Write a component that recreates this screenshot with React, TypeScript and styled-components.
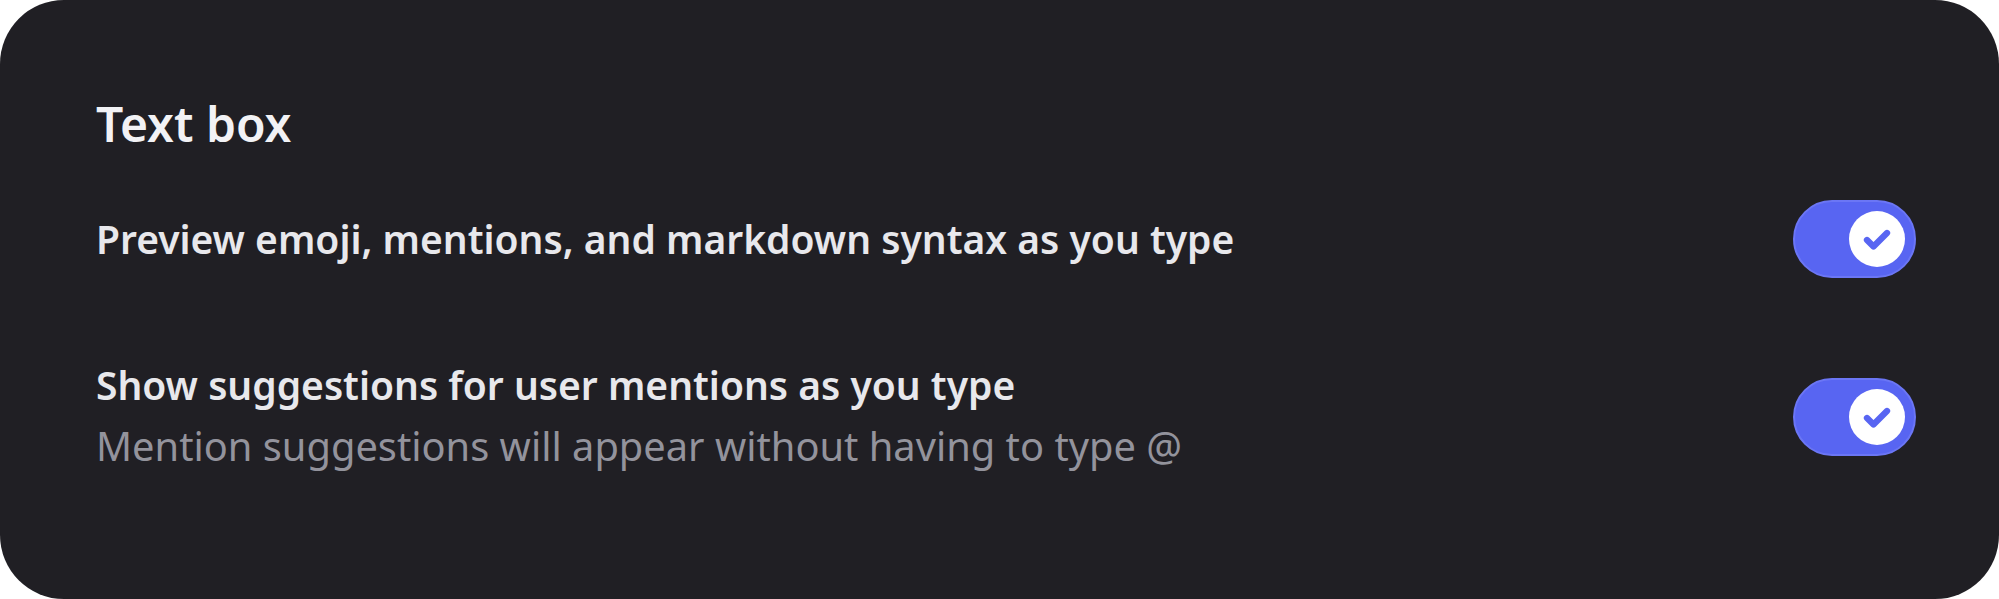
import React, { useState } from "react"
import styled, { createGlobalStyle } from "styled-components"

const GlobalStyle = createGlobalStyle`
  html, body {
    margin: 0;
    padding: 0;
    background: #ffffff;
  }
  body {
    font-family: "Noto Sans", "Open Sans", sans-serif;
  }
`

const Card = styled.section`
  box-sizing: border-box;
  width: 1999px;
  height: 599px;
  background-color: #201f24;
  border-radius: 64px;
  padding: 92px 83px 0 96px;
  display: flex;
  flex-direction: column;
`

const Heading = styled.h2`
  margin: 0;
  color: #f2f2f5;
  font-size: 48px;
  line-height: 64px;
  font-weight: 600;
`

const Rows = styled.div`
  display: flex;
  flex-direction: column;
  gap: 78px;
  margin-top: 44px;
`

const Row = styled.div`
  display: flex;
  align-items: center;
  justify-content: space-between;
  gap: 40px;
`

const TextBlock = styled.div`
  display: flex;
  flex-direction: column;
`

const Title = styled.div`
  color: #e8e8ec;
  font-size: 39px;
  line-height: 58px;
  font-weight: 600;
`

const Description = styled.div`
  color: #93939c;
  font-size: 39.8px;
  line-height: 64px;
  font-weight: 400;
`

const Track = styled.button<{ $on: boolean }>`
  box-sizing: border-box;
  flex: none;
  width: 123px;
  height: 78px;
  padding: 0 9px;
  border-radius: 39px;
  border: 2px solid ${(p) => (p.$on ? "#6b76f5" : "#4e4f58")};
  background-color: ${(p) => (p.$on ? "#5865f2" : "#3f4048")};
  display: flex;
  align-items: center;
  justify-content: ${(p) => (p.$on ? "flex-end" : "flex-start")};
  cursor: pointer;
`

const Thumb = styled.span`
  width: 56px;
  height: 56px;
  border-radius: 50%;
  background-color: #ffffff;
  display: flex;
  align-items: center;
  justify-content: center;
`

function Toggle({ initial }: { initial: boolean }) {
  const [on, setOn] = useState(initial)
  return (
    <Track $on={on} onClick={() => setOn(!on)} aria-pressed={on}>
      <Thumb>
        {on && (
          <svg width="40" height="40" viewBox="0 0 24 24" fill="none">
            <path
              d="M6 12.6l3.9 3.9L18 8.4"
              stroke="#5865f2"
              strokeWidth="3.8"
              strokeLinecap="round"
              strokeLinejoin="round"
            />
          </svg>
        )}
      </Thumb>
    </Track>
  )
}

export default function App() {
  return (
    <>
      <GlobalStyle />
      <Card>
        <Heading>Text box</Heading>
        <Rows>
          <Row>
            <TextBlock>
              <Title>Preview emoji, mentions, and markdown syntax as you type</Title>
            </TextBlock>
            <Toggle initial={true} />
          </Row>
          <Row>
            <TextBlock>
              <Title>Show suggestions for user mentions as you type</Title>
              <Description>Mention suggestions will appear without having to type @</Description>
            </TextBlock>
            <Toggle initial={true} />
          </Row>
        </Rows>
      </Card>
    </>
  )
}
